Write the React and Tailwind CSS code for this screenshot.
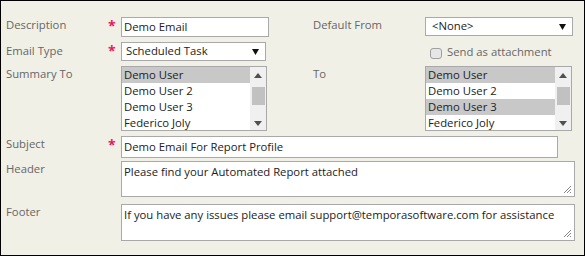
import React from 'react';

const font = { fontFamily: '"Open Sans", "Liberation Sans", sans-serif' };

const Label = ({ children, className = '' }) => (
  <div className={`w-[102px] shrink-0 text-[11.3px] leading-[16px] text-[#666] ${className}`}>{children}</div>
);

const Req = ({ on = true }) => (
  <div className="w-[13px] shrink-0 text-[14px] leading-[14px] font-bold text-[#e8185f] pt-[2px]">{on ? '*' : ''}</div>
);

const Arrow = () => (
  <svg width="7" height="6" viewBox="0 0 7 6" className="shrink-0">
    <polygon points="0,0 7,0 3.5,6" fill="#111" />
  </svg>
);

const Select = ({ value, className = '', pad = 'pl-[4px]' }) => (
  <div className={`flex items-center justify-between bg-white border border-[#a9a9a9] pr-[6px] ${pad} text-[11.3px] text-[#222] ${className}`}>
    <span>{value}</span>
    <Arrow />
  </div>
);

const ScrollBar = () => (
  <div className="w-[16px] shrink-0 bg-[#f0f0f0] flex flex-col items-center">
    <svg width="8" height="5" viewBox="0 0 8 5" className="mt-[6px]">
      <polygon points="0,5 8,5 4,0" fill="#505050" />
    </svg>
    <div className="w-[13px] h-[18px] bg-[#c1c1c1] mt-[9px]" />
    <svg width="8" height="5" viewBox="0 0 8 5" className="mt-[16px]">
      <polygon points="0,0 8,0 4,5" fill="#505050" />
    </svg>
  </div>
);

const ListBox = ({ items, selected, className = '' }) => (
  <div className={`flex bg-white border border-[#a9a9a9] overflow-hidden h-[65px] ${className}`}>
    <div className="flex-1">
      {items.map((it, i) => (
        <div
          key={it}
          className={`h-[16px] leading-[16px] px-[2px] text-[11.3px] text-[#222] ${selected.includes(i) ? 'bg-[#c8c8c8]' : ''}`}
        >
          {it}
        </div>
      ))}
    </div>
    <ScrollBar />
  </div>
);

const Grip = () => (
  <svg width="10" height="10" viewBox="0 0 10 10" className="absolute right-[2px] bottom-[2px]">
    <line x1="9" y1="2" x2="2" y2="9" stroke="#888" strokeWidth="1" />
    <line x1="9" y1="5" x2="5" y2="9" stroke="#888" strokeWidth="1" />
    <line x1="9" y1="8" x2="8" y2="9" stroke="#888" strokeWidth="1" />
  </svg>
);

const TextArea = ({ children, className = '' }) => (
  <div className={`relative bg-white border border-[#a9a9a9] px-[2px] pt-[2px] text-[11.3px] leading-[16px] text-[#222] ${className}`}>
    {children}
    <Grip />
  </div>
);

const users = ['Demo User', 'Demo User 2', 'Demo User 3', 'Federico Joly'];

export default function App() {
  return (
    <div style={font} className="w-[585px] h-[256px] border border-black bg-[#f1f0e6] pl-[5px] pt-[16px] flex flex-col">
      <div className="flex items-start h-[20px]">
        <Label>Description</Label>
        <Req />
        <div className="w-[148px] h-[20px] bg-white border border-[#a9a9a9] pl-[2px] text-[11.3px] leading-[18px] text-[#222]">Demo Email</div>
        <div className="w-[44px] shrink-0" />
        <Label className="w-[112px]">Default From</Label>
        <Select value="<None>" className="w-[148px] h-[19px]" pad="pl-[6px]" />
      </div>

      <div className="flex items-start mt-[5px] h-[19px]">
        <Label className="mt-px">Email Type</Label>
        <Req />
        <Select value="Scheduled Task" className="w-[145px] h-[19px]" />
        <div className="w-[47px] shrink-0" />
        <div className="w-[112px] shrink-0" />
        <div className="flex items-center gap-[5px] mt-[4px] pl-[5px]">
          <div className="w-[12px] h-[11px] rounded-[3px] border border-[#a0a0a0] bg-[#e6e6e6]" />
          <span className="text-[11.3px] leading-[16px] text-[#666] -mt-[2px]">Send as attachment</span>
        </div>
      </div>

      <div className="flex items-start mt-[5px]">
        <Label>Summary To</Label>
        <Req on={false} />
        <ListBox items={users} selected={[0]} className="w-[146px]" />
        <div className="w-[46px] shrink-0" />
        <Label className="w-[112px]">To</Label>
        <ListBox items={users} selected={[0, 2]} className="w-[147px]" />
      </div>

      <div className="flex items-start mt-[5px]">
        <Label>Subject</Label>
        <Req />
        <div className="w-[437px] h-[22px] bg-white border border-[#a9a9a9] pl-[2px] text-[11.3px] leading-[19px] text-[#222]">Demo Email For Report Profile</div>
      </div>

      <div className="flex items-start mt-[3px]">
        <Label>Header</Label>
        <Req on={false} />
        <TextArea className="w-[454px] h-[36px]">Please find your Automated Report attached</TextArea>
      </div>

      <div className="flex items-start mt-[7px]">
        <Label>Footer</Label>
        <Req on={false} />
        <TextArea className="w-[454px] h-[37px]">If you have any issues please email support@temporasoftware.com for assistance</TextArea>
      </div>
    </div>
  );
}
